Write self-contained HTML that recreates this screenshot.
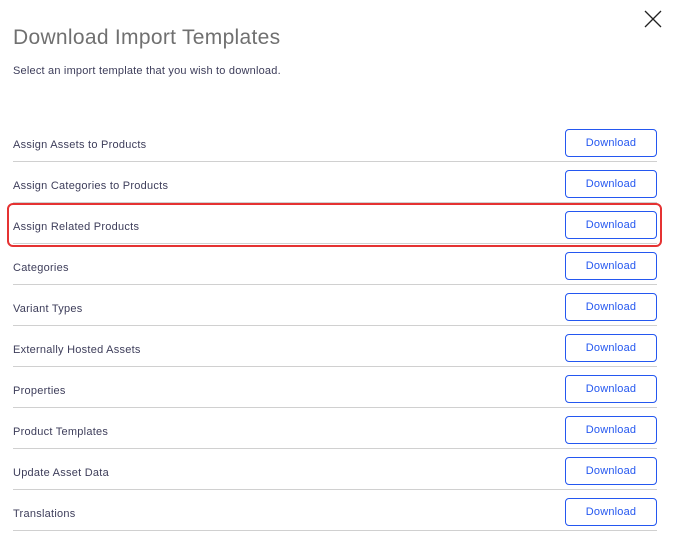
<!DOCTYPE html>
<html><head><style>
body{margin:0;width:680px;height:534px;background:#fff;font-family:"Liberation Sans",sans-serif;position:relative;overflow:hidden}
h1{position:absolute;left:13px;top:26px;margin:0;font-size:21px;font-weight:300;color:#707070;letter-spacing:0.3px}
.sub{position:absolute;left:13px;top:65px;font-size:11px;color:#3d3d5a;letter-spacing:0.2px}
.row{position:absolute;left:13px;width:644px;height:41px;border-bottom:1px solid #d0d0d0;box-sizing:border-box}
.row span{position:absolute;left:0;top:18px;font-size:11px;color:#3d3d5a;letter-spacing:0.25px}
.btn{position:absolute;right:0;top:0;width:92px;height:28px;box-sizing:border-box;border:1px solid #2457f0;border-radius:4px;color:#2457f0;font-size:11px;text-align:center;line-height:26px;letter-spacing:0.2px}
.hl{position:absolute;left:7px;top:203px;width:655px;height:44px;box-sizing:border-box;border:2px solid #e53232;border-radius:6px}
</style></head><body>
<h1>Download Import Templates</h1>
<div class="sub">Select an import template that you wish to download.</div>
<svg style="position:absolute;left:644px;top:10px" width="18" height="18"><path d="M1 1L17 17M17 1L1 17" stroke="#222" stroke-width="1.3"/></svg>
<div class="row" style="top:121px"><span>Assign Assets to Products</span><div class="btn" style="top:8px">Download</div></div>
<div class="row" style="top:162px"><span>Assign Categories to Products</span><div class="btn" style="top:8px">Download</div></div>
<div class="row" style="top:203px"><span>Assign Related Products</span><div class="btn" style="top:8px">Download</div></div>
<div class="row" style="top:244px"><span>Categories</span><div class="btn" style="top:8px">Download</div></div>
<div class="row" style="top:285px"><span>Variant Types</span><div class="btn" style="top:8px">Download</div></div>
<div class="row" style="top:326px"><span>Externally Hosted Assets</span><div class="btn" style="top:8px">Download</div></div>
<div class="row" style="top:367px"><span>Properties</span><div class="btn" style="top:8px">Download</div></div>
<div class="row" style="top:408px"><span>Product Templates</span><div class="btn" style="top:8px">Download</div></div>
<div class="row" style="top:449px"><span>Update Asset Data</span><div class="btn" style="top:8px">Download</div></div>
<div class="row" style="top:490px"><span>Translations</span><div class="btn" style="top:8px">Download</div></div>
<div class="hl"></div>
</body></html>
